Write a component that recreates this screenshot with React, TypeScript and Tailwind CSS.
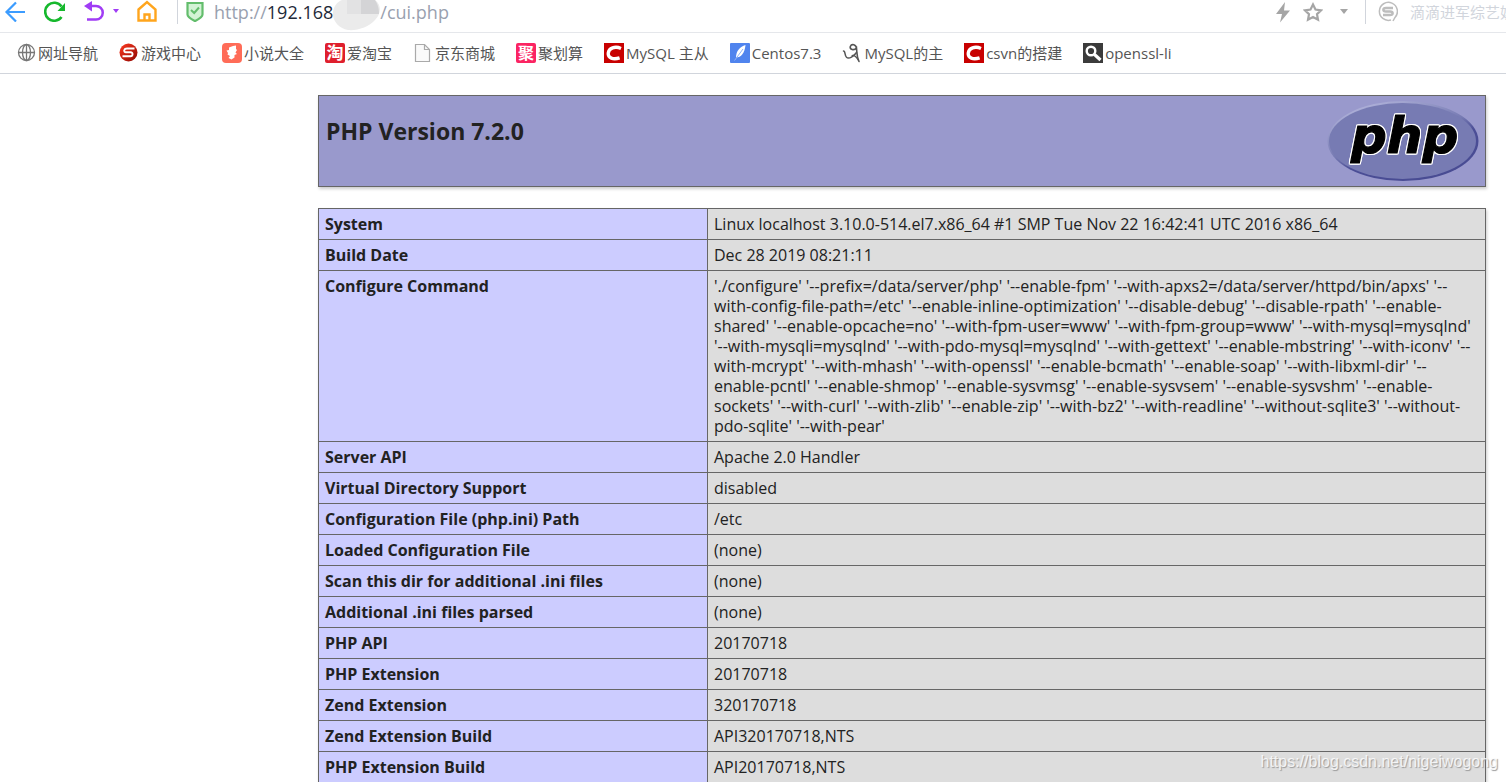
import type { ReactNode } from "react";

const configureLines = [
  "'./configure' '--prefix=/data/server/php' '--enable-fpm' '--with-apxs2=/data/server/httpd/bin/apxs' '--",
  "with-config-file-path=/etc' '--enable-inline-optimization' '--disable-debug' '--disable-rpath' '--enable-",
  "shared' '--enable-opcache=no' '--with-fpm-user=www' '--with-fpm-group=www' '--with-mysql=mysqlnd'",
  "'--with-mysqli=mysqlnd' '--with-pdo-mysql=mysqlnd' '--with-gettext' '--enable-mbstring' '--with-iconv' '--",
  "with-mcrypt' '--with-mhash' '--with-openssl' '--enable-bcmath' '--enable-soap' '--with-libxml-dir' '--",
  "enable-pcntl' '--enable-shmop' '--enable-sysvmsg' '--enable-sysvsem' '--enable-sysvshm' '--enable-",
  "sockets' '--with-curl' '--with-zlib' '--enable-zip' '--with-bz2' '--with-readline' '--without-sqlite3' '--without-",
  "pdo-sqlite' '--with-pear'",
];

const rows: { name: string; lines: string[] }[] = [
  { name: "System", lines: ["Linux localhost 3.10.0-514.el7.x86_64 #1 SMP Tue Nov 22 16:42:41 UTC 2016 x86_64"] },
  { name: "Build Date", lines: ["Dec 28 2019 08:21:11"] },
  { name: "Configure Command", lines: configureLines },
  { name: "Server API", lines: ["Apache 2.0 Handler"] },
  { name: "Virtual Directory Support", lines: ["disabled"] },
  { name: "Configuration File (php.ini) Path", lines: ["/etc"] },
  { name: "Loaded Configuration File", lines: ["(none)"] },
  { name: "Scan this dir for additional .ini files", lines: ["(none)"] },
  { name: "Additional .ini files parsed", lines: ["(none)"] },
  { name: "PHP API", lines: ["20170718"] },
  { name: "PHP Extension", lines: ["20170718"] },
  { name: "Zend Extension", lines: ["320170718"] },
  { name: "Zend Extension Build", lines: ["API320170718,NTS"] },
  { name: "PHP Extension Build", lines: ["API20170718,NTS"] },
];

function CsdnIcon() {
  return (
    <svg width="20" height="20" viewBox="0 0 20 20">
      <rect width="20" height="20" fill="#c80000" />
      <path d="M17 5.4C11 2.8 4.8 5 4.2 10.2C3.8 15 9 17 15.6 14.9" fill="none" stroke="#fff" strokeWidth="3.3" />
    </svg>
  );
}

const bookmarks: { label: string; icon: ReactNode }[] = [
  {
    label: "网址导航",
    icon: (
      <svg width="20" height="20" viewBox="0 0 20 20" fill="none" stroke="#777" strokeWidth="1.3">
        <circle cx="10.5" cy="9.5" r="8" />
        <ellipse cx="10.5" cy="9.5" rx="4" ry="8" />
        <path d="M10.5 1.5v16M2.5 9.5h16" />
      </svg>
    ),
  },
  {
    label: "游戏中心",
    icon: (
      <svg width="20" height="20" viewBox="0 0 20 20">
        <defs>
          <linearGradient id="game" x1="0" y1="0" x2="1" y2="1">
            <stop offset="0" stopColor="#ff3b22" />
            <stop offset="1" stopColor="#8c0500" />
          </linearGradient>
        </defs>
        <circle cx="9.5" cy="9.5" r="9" fill="url(#game)" />
        <path d="M15.5 5.5H8C5 5.5 4 9 7 9.2H11.5C14.5 9.2 14 13.3 11.5 13.3H3.5" fill="none" stroke="#fff" strokeWidth="1.9" />
      </svg>
    ),
  },
  {
    label: "小说大全",
    icon: (
      <svg width="20" height="20" viewBox="0 0 20 20">
        <rect width="20" height="20" rx="4" fill="#ff6c58" />
        <path d="M7 4.5L11 3L14 2.5V6L15 7L13.5 9.5L15 11L12.5 12V14.5L9.5 16.5L6.5 15L8 13L5.5 11.5L6 10L4.5 7.5L7 7Z" fill="#fff" />
      </svg>
    ),
  },
  {
    label: "爱淘宝",
    icon: (
      <svg width="20" height="20" viewBox="0 0 20 20" className="overflow-visible">
        <rect width="20" height="20" rx="2" fill="#df1f2d" />
        <text x="10" y="16" textAnchor="middle" fontSize="17" fontWeight="700" fill="#fff" className="font-['Noto_Sans_CJK_SC',sans-serif]">
          淘
        </text>
      </svg>
    ),
  },
  {
    label: "京东商城",
    icon: (
      <svg width="20" height="20" viewBox="0 0 20 20" fill="#fafafa" stroke="#aaa" strokeWidth="1.2">
        <path d="M2.5 1.5H11.5L16.5 6.5V18.5H2.5Z" />
        <path d="M11.5 1.5V6.5H16.5" fill="none" />
      </svg>
    ),
  },
  {
    label: "聚划算",
    icon: (
      <svg width="20" height="20" viewBox="0 0 20 20" className="overflow-visible">
        <rect width="20" height="20" rx="2" fill="#fb2462" />
        <text x="10" y="16" textAnchor="middle" fontSize="16" fontWeight="700" fill="#fff" className="font-['Noto_Sans_CJK_SC',sans-serif]">
          聚
        </text>
      </svg>
    ),
  },
  { label: "MySQL 主从", icon: <CsdnIcon /> },
  {
    label: "Centos7.3",
    icon: (
      <svg width="20" height="20" viewBox="0 0 20 20">
        <rect width="20" height="20" rx="1" fill="#5084ee" />
        <path d="M15.5 2C10 3.5 6 8 6 14.5C11 14.5 14.8 10 15.5 2Z" fill="#fff" />
        <path d="M13 6L4.5 17.5" stroke="#8fb2f8" strokeWidth="1" />
      </svg>
    ),
  },
  {
    label: "MySQL的主",
    icon: (
      <svg width="20" height="20" viewBox="0 0 20 20" fill="none" stroke="#555" strokeLinecap="round">
        <path d="M1.5 8C3.5 8 2.5 12.5 4.5 14.3C7 16.5 12 13 14.5 9.5" strokeWidth="1.5" />
        <path d="M14.5 6C14.5 1 9.5 .5 8.3 3.5C7.5 6.5 12 8 14.5 5C15 9.5 14.5 13.5 17 18.5" strokeWidth="1.6" />
        <path d="M10 12.5C12.500 12 14.500 14 16.500 17.500" strokeWidth="1.2" />
      </svg>
    ),
  },
  { label: "csvn的搭建", icon: <CsdnIcon /> },
  {
    label: "openssl-li",
    icon: (
      <svg width="20" height="20" viewBox="0 0 20 20">
        <rect width="20" height="20" fill="#3b3b3b" />
        <circle cx="8" cy="8" r="4.3" fill="none" stroke="#fff" strokeWidth="2.4" />
        <path d="M11.5 11.5L17.5 17" stroke="#fff" strokeWidth="3.2" />
      </svg>
    ),
  },
];

function PhpLogo() {
  return (
    <svg width="152" height="82" viewBox="0 0 152 82" role="img" aria-label="PHP logo">
      <defs>
        <linearGradient id="rim" x1="0.2" y1="0" x2="0.8" y2="1">
          <stop offset="0" stopColor="#b5b7dd" />
          <stop offset="0.45" stopColor="#777bb3" />
          <stop offset="0.6" stopColor="#4b4e96" />
          <stop offset="1" stopColor="#484b92" />
        </linearGradient>
      </defs>
      <ellipse cx="76" cy="41" rx="75.5" ry="40" fill="url(#rim)" />
      <ellipse cx="75.5" cy="41" rx="73.5" ry="38" fill="#777bb3" />
      <text
        x="24"
        y="53"
        fontSize="50"
        fontWeight="700"
        fontStyle="italic"
        fill="#000"
        stroke="#000"
        strokeWidth="1.2"
        className="font-['DejaVu_Sans',sans-serif] [filter:drop-shadow(1px_0_0_#fff)_drop-shadow(-1px_0_0_#fff)_drop-shadow(0_1px_0_#fff)_drop-shadow(0_-1px_0_#fff)]"
      >
        php
      </text>
    </svg>
  );
}

function Toolbar() {
  return (
    <div className="flex h-[33px] items-start border-b border-gray-200">
      <div className="flex items-center gap-[18px] pl-1">
        <button aria-label="Back">
          <svg width="22" height="22" viewBox="0 0 22 22" fill="none" stroke="#3c9cff" strokeWidth="2.2">
            <path d="M21 12H2.5M12 2.5L2.5 12L12 21.5" />
          </svg>
        </button>
        <button aria-label="Reload">
          <svg width="22" height="22" viewBox="0 0 22 22">
            <path d="M18.5 6.5A9 9 0 1 0 18.5 17" transform="translate(-1 0)" fill="none" stroke="#16b82d" strokeWidth="2.6" />
            <path d="M21 3V11H13.5Z" fill="#16b82d" />
          </svg>
        </button>
        <button aria-label="Undo" className="flex items-center gap-[7px]">
          <svg width="22" height="22" viewBox="0 0 22 22">
            <path d="M4 6H12A6.5 6.5 0 0 1 12 19.5H3" fill="none" stroke="#a03cf5" strokeWidth="2.5" />
            <path d="M8 1V11.5L0 6Z" fill="#a03cf5" />
          </svg>
          <svg width="6" height="4" viewBox="0 0 6 4">
            <path d="M0 0H6L3 4Z" fill="#a03cf5" />
          </svg>
        </button>
        <button aria-label="Home">
          <svg width="20" height="22" viewBox="0 0 20 22" fill="none" stroke="#ffa51d" strokeWidth="2.4">
            <path d="M1.5 9.5L10 2L18.5 9.5V20.5H1.5Z" />
            <path d="M7.5 20V14.5H12.5V20" />
          </svg>
        </button>
      </div>
      <div className="ml-5 h-6 w-px bg-gray-300" />
      <svg className="ml-2" width="18" height="22" viewBox="0 0 18 22">
        <path d="M1.5 3H16.5V14.5C16.5 17.5 12 19.5 9 21C6 19.5 1.5 17.5 1.5 14.5Z" fill="#d3f3d5" stroke="#63bd6c" strokeWidth="2.2" />
        <path d="M5 10L8.2 13L13 7.5" fill="none" stroke="#63bd6c" strokeWidth="2" />
      </svg>
      <div className="ml-2.5 flex items-start text-lg leading-6 text-gray-400">
        <span>http://</span>
        <span className="text-gray-800">192.168</span>
        <svg className="h-[31px] w-[47px]" viewBox="0 0 47 31" preserveAspectRatio="none">
          <path d="M9 0H42C49 5 48 14 42 20C36 27 24 31 15 30C5 28 -1 20 0 12C1 6 4 2 9 0Z" fill="#ebebeb" />
          <path d="M28 0H42C44 3 46 7 46 14H28Z" fill="#d4d4d6" />
          <path d="M14 0H28V14H14Z" fill="#e2e2e3" />
        </svg>
        <span>/cui.php</span>
      </div>
      <div className="ml-auto flex items-center text-gray-400">
        <button aria-label="Speed mode">
          <svg width="16" height="22" viewBox="0 0 16 22" fill="#a5a5a5">
            <path d="M10 1L1 13H7L5 21.5L15 9.5H9Z" />
          </svg>
        </button>
        <button aria-label="Add to favourites" className="ml-3">
          <svg width="20" height="22" viewBox="0 0 20 22" fill="none" stroke="#a5a5a5" strokeWidth="2.2">
            <path d="M10 3.5L12.5 8.6L18 9.3L14 13.2L15 18.7L10 16L5 18.7L6 13.2L2 9.3L7.5 8.6Z" />
          </svg>
        </button>
        <button aria-label="More" className="ml-4">
          <svg width="10" height="6" viewBox="0 0 10 6">
            <path d="M1 0H9L5 5Z" fill="#a5a5a5" />
          </svg>
        </button>
        <div className="ml-4 h-6 w-px bg-gray-300" />
        <svg className="ml-3" width="20" height="22" viewBox="0 0 20 22" fill="none" stroke="#bdbdbd">
          <path d="M13 19A9 9 0 1 1 17 16.5L15 20" strokeWidth="1.5" />
          <path d="M15 7H8C4.5 7 4.5 10.5 8 10.5H12C15.5 10.5 15.5 14 12 14H5" strokeWidth="2.5" />
        </svg>
        <div className="ml-3 w-24 overflow-hidden text-[15px] leading-6 whitespace-nowrap text-gray-300">滴滴进军综艺娱</div>
      </div>
    </div>
  );
}

export default function App() {
  return (
    <div className="relative h-screen overflow-hidden bg-white font-['Open_Sans','Noto_Sans_CJK_SC',sans-serif] text-[#222]">
      <Toolbar />
      <nav className="flex h-[41px] items-center gap-[21px] border-b border-gray-300 pl-4">
        {bookmarks.map((bookmark) => (
          <a key={bookmark.label} href="#" className="flex shrink-0 items-center gap-0.5 text-[15px] leading-5 text-[#555]">
            {bookmark.icon}
            <span>{bookmark.label}</span>
          </a>
        ))}
      </nav>

      <main className="flex flex-col gap-[21px] pt-[21px] pr-5 pl-[318px]">
        <header className="flex h-[92px] items-start justify-between border border-[#666] bg-[#9999cc] pt-1 pr-1.5 pl-[7px] shadow-[1px_2px_3px_#ccc]">
          <h1 className="pt-[15px] text-[23px] leading-8 font-bold">PHP Version 7.2.0</h1>
          <PhpLogo />
        </header>

        <table className="w-full table-fixed border-collapse text-base leading-5 shadow-[1px_2px_3px_#ccc]">
          <tbody>
            {rows.map((row) => (
              <tr key={row.name}>
                <th scope="row" className="w-1/3 border border-[#666] bg-[#ccccff] px-1.5 py-[5px] text-left align-top font-bold">
                  {row.name}
                </th>
                <td className="border border-[#666] bg-[#dddddd] px-1.5 py-[5px] align-top whitespace-nowrap">
                  {row.lines.map((line) => (
                    <div key={line}>{line}</div>
                  ))}
                </td>
              </tr>
            ))}
          </tbody>
        </table>
      </main>

      <div className="absolute right-2 bottom-2 font-['Liberation_Sans',sans-serif] text-base text-white/80 [text-shadow:1px_1px_1px_#999]">
        https://blog.csdn.net/nigeiwogong
      </div>
    </div>
  );
}
